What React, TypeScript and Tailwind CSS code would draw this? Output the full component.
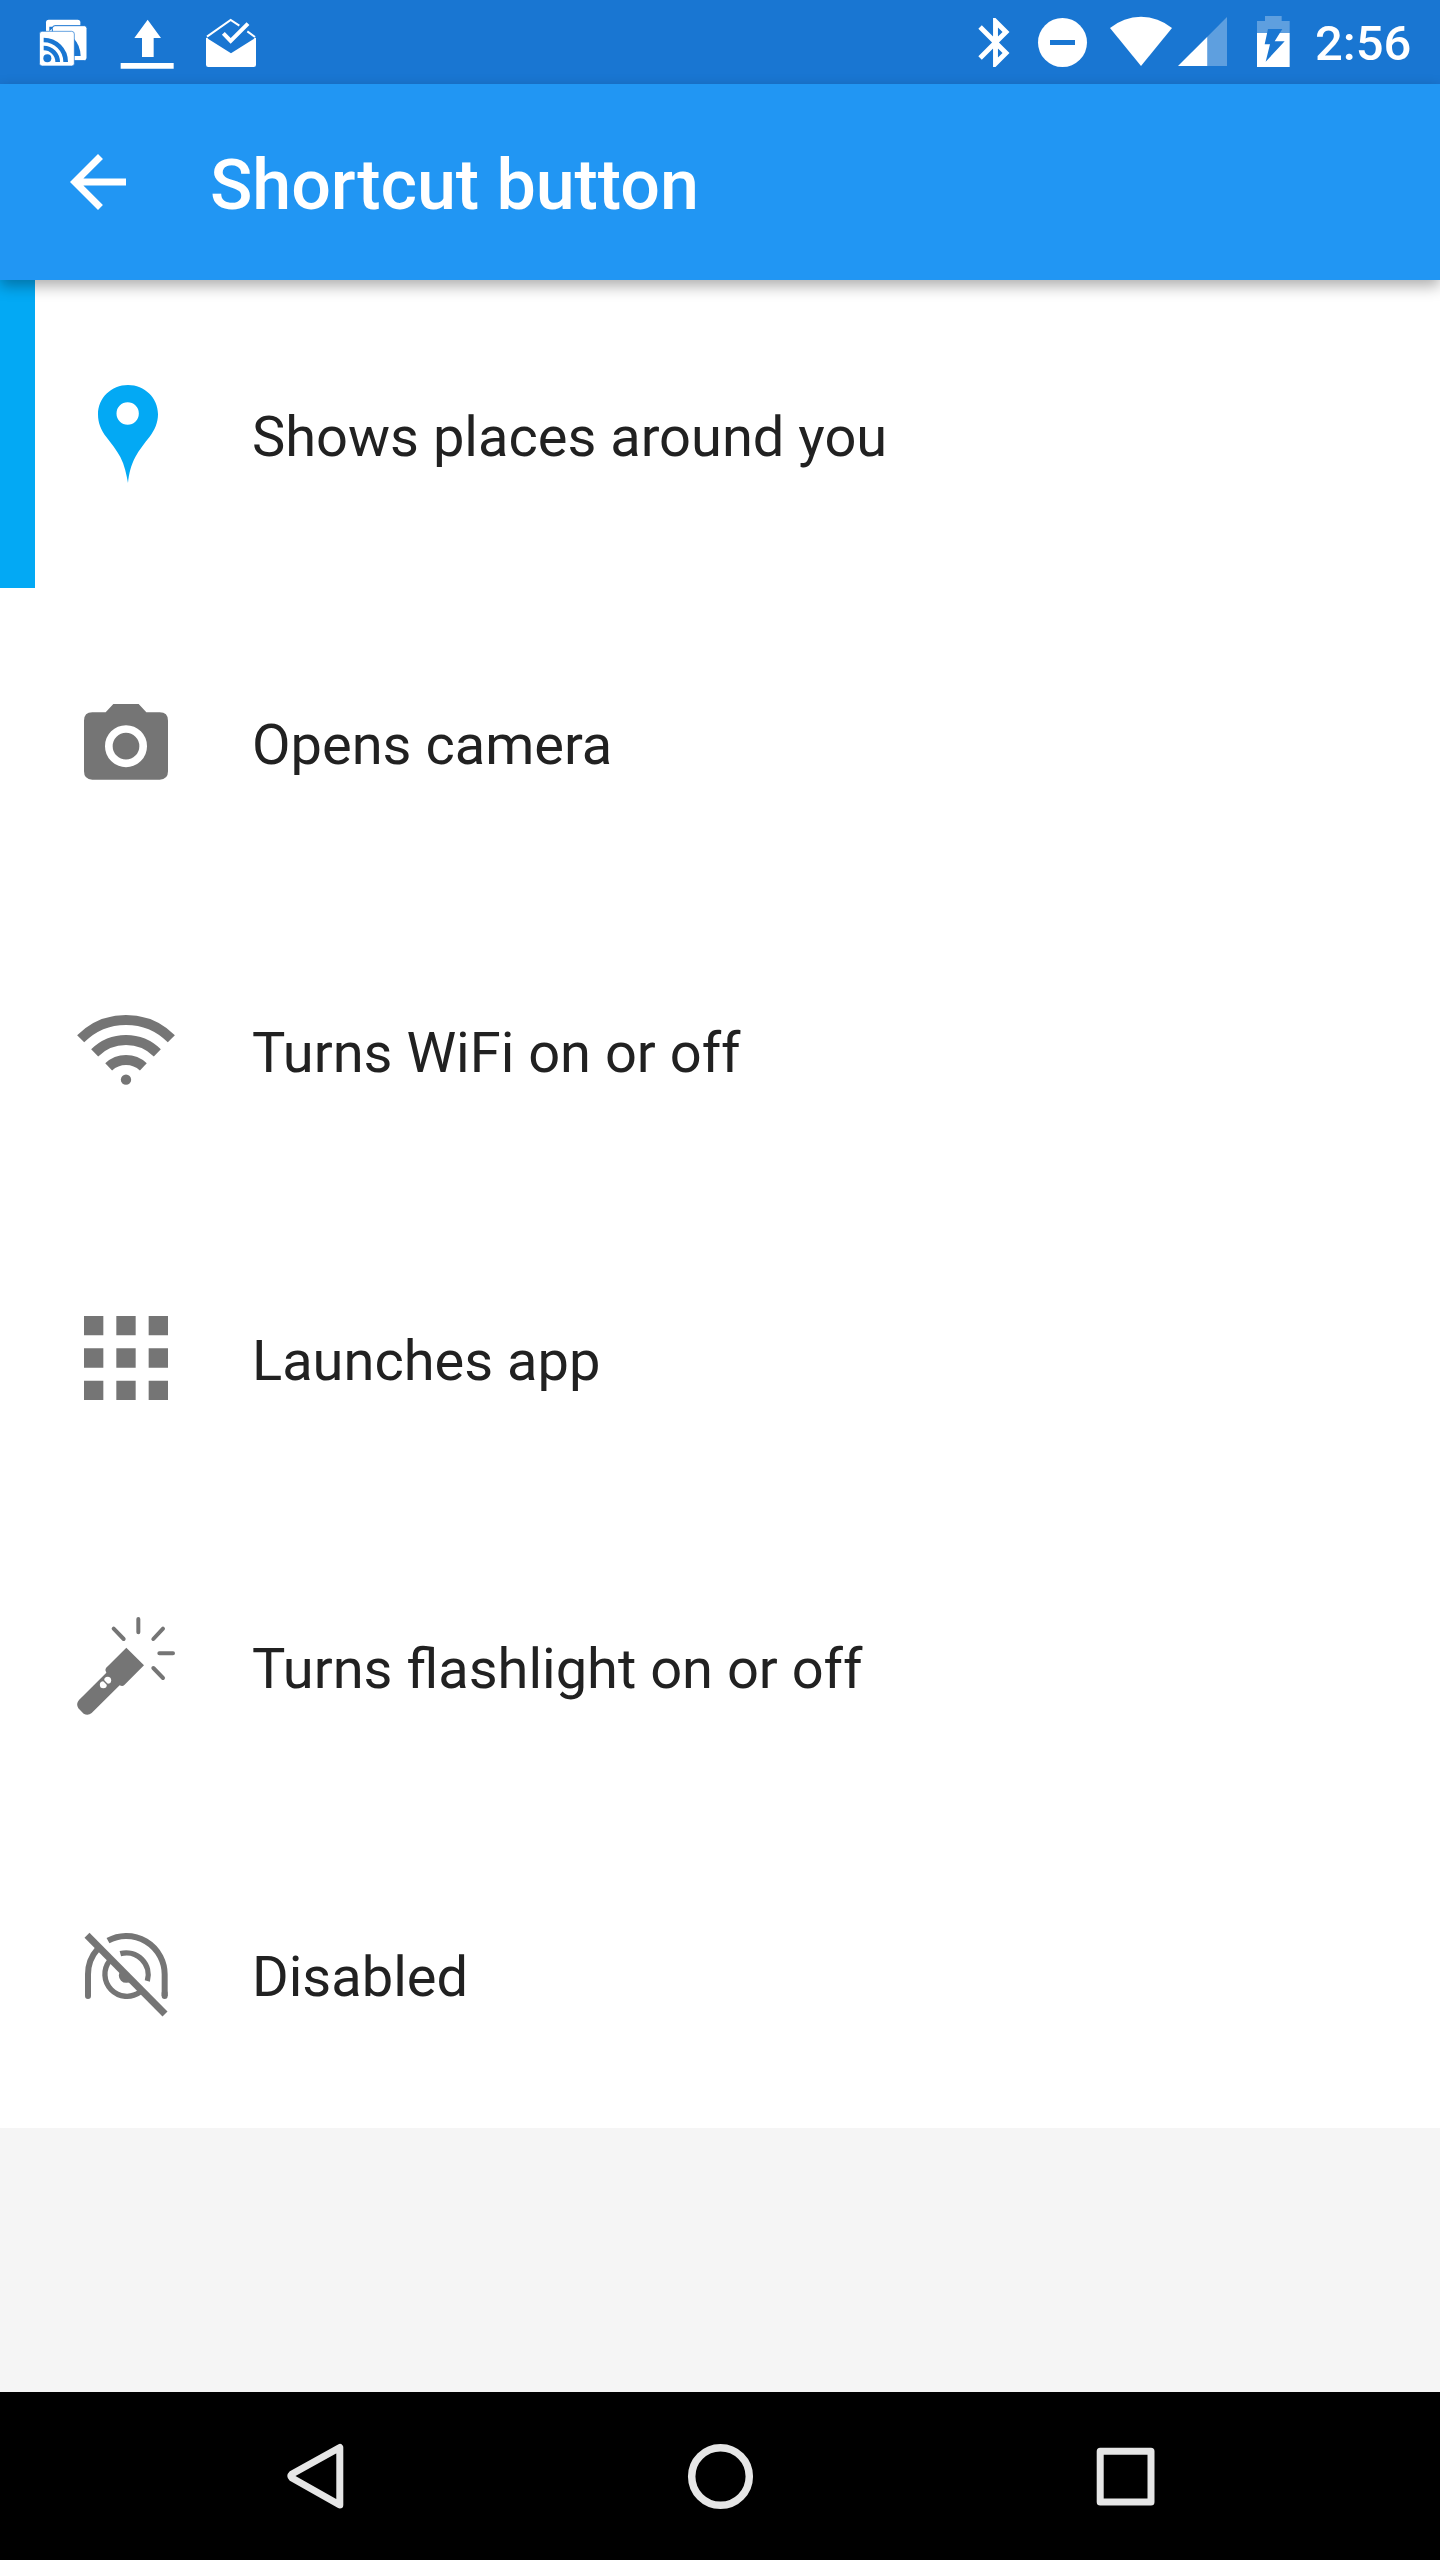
import type { ReactNode } from "react";

function StatusBar() {
  return (
    <div className="flex h-[84px] justify-between bg-[#1976d2] pr-7 pl-9 text-white">
      <div className="flex gap-7">
        <svg className="h-[84px] w-[54px]" viewBox="108 0 162 252" fill="currentColor" aria-hidden="true">
          <rect x="138" y="59" width="103" height="104" rx="8" />
          <path d="M148 94V80h14" fill="#1976d2" />
          <rect x="157" y="77" width="104" height="105" rx="8" stroke="#1976d2" strokeWidth="3" />
          <path d="M222 116Q241 136 242 168H222z" fill="#1976d2" />
          <rect x="118.500" y="94" width="104.500" height="104" rx="8" stroke="#1976d2" strokeWidth="2" />
          <circle cx="142" cy="175" r="12" fill="#1976d2" />
          <path d="M131 144a42 42 0 0 1 42 42M131 120a66 66 0 0 1 66 66" fill="none" stroke="#1976d2" strokeWidth="14" />
        </svg>
        <svg className="h-[84px] w-[58px]" viewBox="354 0 174 252" fill="currentColor" aria-hidden="true">
          <path d="M443 59L483 114H461V171H426V114H403zM362 189H521V206H362z" />
        </svg>
        <svg className="h-[84px] w-[54px]" viewBox="612 0 162 252" fill="currentColor" aria-hidden="true">
          <path d="M618 114Q622 112 625 117L693 160L761 117Q764 112 768 114V194Q768 201 761 201H625Q618 201 618 194z" />
          <path d="M621 110L692 60L718 77M742 94L765 111" fill="none" stroke="currentColor" strokeWidth="6" />
          <path d="M670 100L692 123L744 71" fill="none" stroke="currentColor" strokeWidth="12" />
        </svg>
      </div>
      <div className="flex">
        <svg className="h-[84px] w-[342px]" viewBox="0 0 1026 252" fill="currentColor" aria-hidden="true">
          <path
            transform="translate(18.300 39.300) scale(7.350)"
            d="M17.710 7.710L12 2h-1v7.590L6.410 5 5 6.410 10.590 12 5 17.590 6.410 19 11 14.410V22h1l5.710-5.710-4.300-4.290 4.300-4.290zM13 5.830l1.880 1.880L13 9.590V5.830zm1.880 10.460L13 18.170v-3.760l1.880 1.880z"
          />
          <circle cx="307.500" cy="127.500" r="73.500" />
          <path d="M270 120h75v15h-75z" fill="#1976d2" />
          <path d="M450 84A146 146 0 0 1 636 84L543 198z" />
          <path d="M742 110L801 51V198H742z" opacity=".3" />
          <path d="M654 198L742 110V198z" />
          <path d="M891 99V63H915V48H965V63H989V99z" opacity=".3" />
          <path d="M891 99H989V201H891z" />
          <path d="M924 87H967L944 124H974L917 185L930 133H914z" fill="#1976d2" />
        </svg>
        <time className="ml-[13px] w-[97px] pt-[1px] text-[49px] leading-[86px] font-medium whitespace-nowrap">2:56</time>
      </div>
    </div>
  );
}

function PlacesIcon() {
  return (
    <svg className="size-[140px] text-[#03a9f4]" viewBox="180 12 420 420" fill="currentColor" aria-hidden="true">
      <path
        fillRule="evenodd"
        d="M384 75C334 75 294 114 294 163C294 189 303 211 319 231C334 251 351 272 361 291C374 316 379 342 384 369C387 340 393 316 406 291C417 270 434 249 449 230C464 211 474 188 474 163C474 114 434 75 384 75zM383 127a33.500 33.500 0 1 1 0 67a33.500 33.500 0 1 1 0-67z"
      />
    </svg>
  );
}

function CameraIcon() {
  return (
    <svg className="size-[140px]" viewBox="0 -24 420 420" fill="currentColor" aria-hidden="true">
      <path d="M160 72H236L259 97H299Q324 97 324 122V274Q324 299 299 299H97Q72 299 72 274V122Q72 97 97 97H137z" />
      <circle cx="198" cy="198.500" r="51.500" fill="none" stroke="white" strokeWidth="23" />
    </svg>
  );
}

function WifiIcon() {
  return (
    <svg className="size-[140px]" viewBox="0 -30 420 420" fill="none" stroke="currentColor" strokeWidth="30" aria-hidden="true">
      <path d="M62 146.500A192 192 0 0 1 334 146.500M104 188.500A134 134 0 0 1 292 188.500M146 230.500A76 76 0 0 1 250 230.500" />
      <circle cx="198" cy="269" r="15.500" fill="currentColor" stroke="none" />
    </svg>
  );
}

function AppsIcon() {
  return (
    <svg className="size-[140px]" viewBox="0 -36 420 420" fill="currentColor" aria-hidden="true">
      <path d="M72 48h58v58h-58zM169 48h58v58h-58zM266 48h58v58h-58zM72 145h58v58h-58zM169 145h58v58h-58zM266 145h58v58h-58zM72 242h58v58h-58zM169 242h58v58h-58zM266 242h58v58h-58z" />
    </svg>
  );
}

function FlashlightIcon() {
  return (
    <svg className="size-[140px]" viewBox="0 -12 420 420" fill="currentColor" aria-hidden="true">
      <path d="M199 143L252 196L193 255Q188 260 179 256L95 339Q84 348 71 341L55 325Q47 311 57 300L139 218Q133 211 138 204z" />
      <path
        d="M235 57V97M161 86L191 117M309 86L280 117M298 160H339M280 204L309 234"
        fill="none"
        stroke="currentColor"
        strokeWidth="12"
        strokeLinecap="round"
      />
      <circle cx="143" cy="241" r="10.500" fill="white" />
      <circle cx="130" cy="254" r="10.500" fill="white" />
      <path d="M130 241L143 254" stroke="currentColor" strokeWidth="4" />
    </svg>
  );
}

function DisabledIcon() {
  return (
    <svg className="size-[140px]" viewBox="0 -18 420 420" fill="none" stroke="currentColor" aria-hidden="true">
      <path d="M81 76L315 312" strokeWidth="21" />
      <path d="M84 258V193Q84 149 113 117M314 258V193A115 115 0 0 0 144 92" strokeWidth="18" />
      <path d="M84 250V258M314 250V258" strokeWidth="18" strokeLinecap="round" />
      <path d="M181 131A66 66 0 0 1 262 213M240 246A66 66 0 0 1 149 152" strokeWidth="16" />
      <path d="M183 180A22.600 22.600 0 0 0 215 212z" fill="currentColor" stroke="none" />
    </svg>
  );
}

const options: { label: string; icon: ReactNode; selected?: boolean }[] = [
  { label: "Shows places around you", icon: <PlacesIcon />, selected: true },
  { label: "Opens camera", icon: <CameraIcon /> },
  { label: "Turns WiFi on or off", icon: <WifiIcon /> },
  { label: "Launches app", icon: <AppsIcon /> },
  { label: "Turns flashlight on or off", icon: <FlashlightIcon /> },
  { label: "Disabled", icon: <DisabledIcon /> }
];

export default function App() {
  return (
    <div className="flex h-[2560px] w-[1440px] flex-col overflow-hidden bg-[#f5f5f5] font-[Roboto,sans-serif]">
      <StatusBar />
      <header className="relative z-10 flex h-[196px] shrink-0 items-center bg-[#2196f3] pl-14 text-white shadow-[0_6px_14px_rgba(0,0,0,0.32)]">
        <button type="button" aria-label="Back">
          <svg className="size-[84px]" viewBox="0 0 24 24" fill="currentColor" aria-hidden="true">
            <path d="M20 11H7.830l5.590-5.590L12 4l-8 8 8 8 1.410-1.410L7.830 13H20v-2z" />
          </svg>
        </button>
        <h1 className="ml-[70px] pt-1.5 text-[70px] leading-[82px] font-medium tracking-[-0.06px] whitespace-nowrap">Shortcut button</h1>
      </header>
      <main className="grow">
        {options.map((item) => (
          <button key={item.label} type="button" className="flex h-[308px] w-full items-center bg-white text-left">
            <span className={`h-full w-[35px] ${item.selected ? "bg-[#03a9f4]" : ""}`} />
            <span className="ml-[25px] text-[#757575]">{item.icon}</span>
            <span className="ml-[52px] pt-1.5 text-[56px] leading-[66px] whitespace-nowrap text-[#212121]">{item.label}</span>
          </button>
        ))}
      </main>
      <nav className="flex h-[168px] shrink-0 items-center justify-between bg-black px-[273px] text-[#e6e6e6]" aria-label="System navigation">
        <svg className="size-[84px]" viewBox="0 0 84 84" fill="none" stroke="currentColor" strokeWidth="7" strokeLinejoin="round" aria-hidden="true">
          <path d="M66.800 13.500V71L19 44Q17 42 19 40z" />
        </svg>
        <svg className="size-[84px]" viewBox="0 0 84 84" fill="none" stroke="currentColor" strokeWidth="7.500" aria-hidden="true">
          <circle cx="42.500" cy="42.500" r="28.800" />
        </svg>
        <svg className="size-[84px]" viewBox="0 0 84 84" fill="none" stroke="currentColor" strokeWidth="7" strokeLinejoin="round" aria-hidden="true">
          <path d="M17.200 17.200H68V68H17.200z" />
        </svg>
      </nav>
    </div>
  );
}
